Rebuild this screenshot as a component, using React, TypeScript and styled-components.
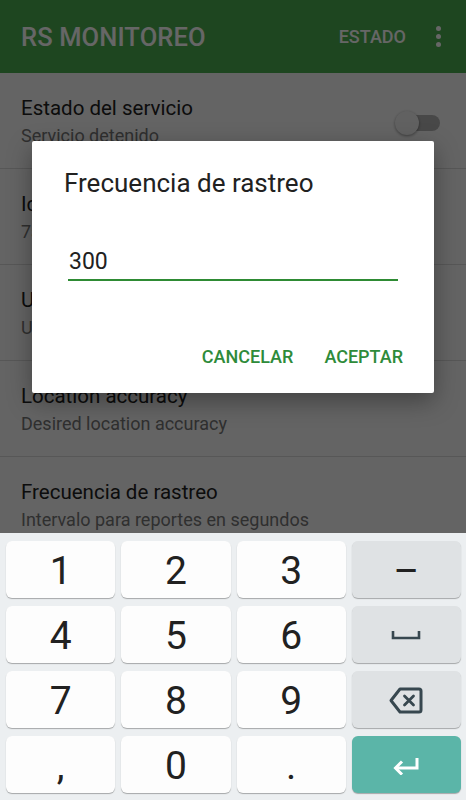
import styled, { createGlobalStyle } from 'styled-components'

const GlobalStyle = createGlobalStyle`
html, body { margin: 0; padding: 0; }
body { font-family: Roboto, 'Noto Sans', Arial, sans-serif; background: #fff; }
* { box-sizing: border-box; }
`

interface Setting {
    title: string
    summary: string
    toggle?: boolean
}

const settings: Setting[] = [
    { title: 'Estado del servicio', summary: 'Servicio detenido', toggle: true },
    { title: 'Identificador del equipo', summary: '7a41c0d9e2b35f86' },
    { title: 'URL del servidor', summary: 'URL para el envío de reportes' },
    { title: 'Location accuracy', summary: 'Desired location accuracy' },
    { title: 'Frecuencia de rastreo', summary: 'Intervalo para reportes en segundos' },
]

type KeyKind = 'digit' | 'fn' | 'enter'
interface KeyDef { label?: string; icon?: 'space' | 'backspace' | 'enter'; kind: KeyKind }

const keys: KeyDef[] = [
    { label: '1', kind: 'digit' }, { label: '2', kind: 'digit' }, { label: '3', kind: 'digit' }, { label: '–', kind: 'fn' },
    { label: '4', kind: 'digit' }, { label: '5', kind: 'digit' }, { label: '6', kind: 'digit' }, { icon: 'space', kind: 'fn' },
    { label: '7', kind: 'digit' }, { label: '8', kind: 'digit' }, { label: '9', kind: 'digit' }, { icon: 'backspace', kind: 'fn' },
    { label: ',', kind: 'digit' }, { label: '0', kind: 'digit' }, { label: '.', kind: 'digit' }, { icon: 'enter', kind: 'enter' },
]

function KeyIcon ({ name }: { name: 'space' | 'backspace' | 'enter' }): JSX.Element {
    if (name === 'space') {
        return <svg width='30' height='9' viewBox='0 0 30 9'>
            <path d='M2 0 V7 H28 V0' fill='none' stroke='#37474f' strokeWidth='2.6' />
        </svg>
    }
    if (name === 'backspace') {
        return <svg width='34' height='27' viewBox='0 0 34 27'>
            <path d='M11 2 H30 a2 2 0 0 1 2 2 V23 a2 2 0 0 1 -2 2 H11 L2 13.5 Z' fill='none' stroke='#37474f' strokeWidth='3' strokeLinejoin='round' />
            <path d='M15.5 9 L24.5 18 M24.5 9 L15.5 18' stroke='#37474f' strokeWidth='2.8' strokeLinecap='round' />
        </svg>
    }
    return <svg width='28' height='18' viewBox='0 0 28 18'>
        <path d='M25 1 V11 H4' fill='none' stroke='#fff' strokeWidth='3' />
        <path d='M10 4.5 L3.5 11 L10 17.5' fill='none' stroke='#fff' strokeWidth='3' />
    </svg>
}

export default function App (): JSX.Element {
    return <Phone>
        <GlobalStyle />
        <Screen>
            <AppBar>
                <Title>RS MONITOREO</Title>
                <Action>ESTADO</Action>
                <Overflow><i /><i /><i /></Overflow>
            </AppBar>
            <List>
                {settings.map((item, index) => (
                    <Row key={index}>
                        <RowText>
                            <RowTitle>{item.title}</RowTitle>
                            <RowSummary>{item.summary}</RowSummary>
                        </RowText>
                        {item.toggle && <Switch><span /></Switch>}
                    </Row>
                ))}
            </List>
            <Scrim />
            <DialogLayer>
                <Dialog>
                    <DialogTitle>Frecuencia de rastreo</DialogTitle>
                    <Field>300</Field>
                    <Buttons>
                        <TextButton>CANCELAR</TextButton>
                        <TextButton>ACEPTAR</TextButton>
                    </Buttons>
                </Dialog>
            </DialogLayer>
        </Screen>
        <Keyboard>
            {keys.map((k, index) => (
                <Key key={index} $kind={k.kind}>
                    {k.icon ? <KeyIcon name={k.icon} /> : k.label}
                </Key>
            ))}
        </Keyboard>
    </Phone>
}

const Phone = styled.div`
display: flex;
flex-direction: column;
width: 466px;
height: 800px;
overflow: hidden;
`

const Screen = styled.div`
position: relative;
flex: 1;
overflow: hidden;
background: #fafafa;
`

const AppBar = styled.div`
display: flex;
align-items: center;
height: 73px;
padding: 0 0 0 21px;
background: #4caf50;
color: #fff;
`

const Title = styled.div`
flex: 1;
font-size: 25.5px;
font-weight: 500;
letter-spacing: 0.1px;
`

const Action = styled.div`
font-size: 18px;
font-weight: 500;
margin-right: 22px;
`

const Overflow = styled.div`
display: flex;
flex-direction: column;
align-items: center;
gap: 3px;
width: 20px;
margin-right: 18px;
i {
    display: block;
    width: 5px;
    height: 5px;
    border-radius: 50%;
    background: #fff;
}
`

const List = styled.div`
display: flex;
flex-direction: column;
`

const Row = styled.div`
display: flex;
align-items: flex-start;
height: 96px;
padding: 23px 26px 0 21px;
border-bottom: 1px solid #dadada;
`

const RowText = styled.div`
flex: 1;
`

const RowTitle = styled.div`
font-size: 20.5px;
line-height: 24px;
color: #212121;
`

const RowSummary = styled.div`
margin-top: 5px;
font-size: 18px;
line-height: 21px;
color: #777;
`

const Switch = styled.div`
position: relative;
width: 45px;
height: 24px;
margin-top: 15px;
span {
    position: absolute;
    left: 5px;
    right: 0;
    top: 4px;
    height: 16px;
    border-radius: 8px;
    background: #b4b4b4;
}
&::after {
    content: '';
    position: absolute;
    left: 0;
    top: 0;
    width: 24px;
    height: 24px;
    border-radius: 50%;
    background: #f2f2f2;
    box-shadow: 0 1px 3px rgba(0, 0, 0, 0.4);
}
`

const Scrim = styled.div`
position: absolute;
inset: 0;
background: rgba(0, 0, 0, 0.6);
`

const DialogLayer = styled.div`
position: absolute;
inset: 0;
display: flex;
align-items: center;
justify-content: center;
`

const Dialog = styled.div`
display: flex;
flex-direction: column;
width: 402px;
height: 252px;
padding: 27px 0 18px;
background: #fff;
border-radius: 2px;
box-shadow: 0 8px 24px rgba(0, 0, 0, 0.35);
`

const DialogTitle = styled.div`
padding: 0 32px;
font-size: 26px;
line-height: 30px;
color: #212121;
`

const Field = styled.div`
margin: 50px 36px 0;
padding: 0 0 4px 1px;
font-size: 23px;
line-height: 27px;
color: #212121;
border-bottom: 2px solid #2e8b34;
`

const Buttons = styled.div`
display: flex;
justify-content: flex-end;
gap: 15px;
margin-top: auto;
padding-right: 23px;
`

const TextButton = styled.div`
display: flex;
align-items: center;
height: 36px;
padding: 0 8px;
font-size: 18px;
font-weight: 500;
color: #2e8b3a;
`

const Keyboard = styled.div`
display: grid;
grid-template-columns: repeat(4, 1fr);
grid-auto-rows: 57px;
column-gap: 6px;
row-gap: 8px;
padding: 8px 5px 7px 6px;
background: #eceff1;
`

const Key = styled.div<{ $kind: KeyKind }>`
display: flex;
align-items: center;
justify-content: center;
padding-top: 2px;
border-radius: 6px;
font-size: 39px;
font-weight: 400;
color: #212121;
background: ${p => p.$kind === 'enter' ? '#5bb5a8' : p.$kind === 'fn' ? '#dfe2e4' : '#fdfdfd'};
box-shadow: 0 1px 1px rgba(0, 0, 0, 0.3);
`
